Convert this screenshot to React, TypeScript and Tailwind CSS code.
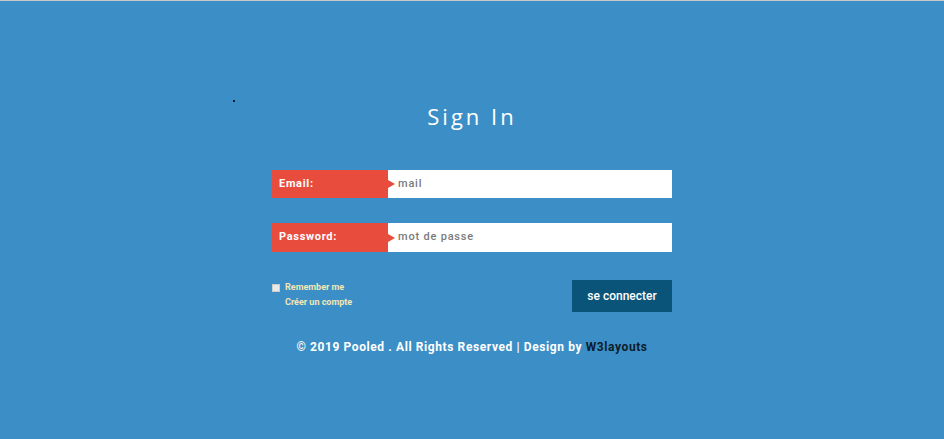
export default function App() {
  return (
    <div className="h-[439px] w-[944px] overflow-hidden border-t border-[#c9c9c9] bg-[#3c8fc6] font-['Roboto',sans-serif]">
      <div className="relative flex flex-col items-center">
        <span className="absolute left-[233px] top-[99px] h-[2px] w-[2px] bg-[#0b1a2a]" />
        <h1 className="mt-[100px] font-['Open_Sans',sans-serif] text-[22px] font-normal leading-[30px] tracking-[3px] text-white">
          Sign In
        </h1>

        <form className="mt-[39px] flex w-[400px] flex-col">
          <div className="flex h-[28px]">
            <label className="relative flex w-[116px] items-center bg-[#e84c3d] pl-[7px] text-[11px] font-bold tracking-[0.7px] text-white">
              Email:
              <span className="absolute left-full top-1/2 -translate-y-1/2 border-y-[4px] border-l-[7px] border-y-transparent border-l-[#e84c3d]" />
            </label>
            <input
              type="text"
              placeholder="mail"
              className="flex-1 bg-white pl-[10px] text-[11px] font-medium tracking-[0.8px] text-[#666] outline-none placeholder:text-[#7a7a7a]"
            />
          </div>

          <div className="mt-[25px] flex h-[29px]">
            <label className="relative flex w-[116px] items-center bg-[#e84c3d] pl-[7px] text-[11px] font-bold tracking-[0.7px] text-white">
              Password:
              <span className="absolute left-full top-1/2 -translate-y-1/2 border-y-[4px] border-l-[7px] border-y-transparent border-l-[#e84c3d]" />
            </label>
            <input
              type="password"
              placeholder="mot de passe"
              className="flex-1 bg-white pl-[10px] text-[11px] font-medium tracking-[0.8px] text-[#666] outline-none placeholder:text-[#7a7a7a]"
            />
          </div>

          <div className="mt-[28px] flex items-start justify-between">
            <div className="flex flex-col text-[9px] font-bold leading-[15px] text-[#f2e6b3]">
              <label className="flex items-center gap-[5px]">
                <span className="h-[8px] w-[8px] border border-[#ccc] bg-[#e9e9e9]" />
                Remember me
              </label>
              <a className="pl-[13px]">Créer un compte</a>
            </div>
            <button
              type="button"
              className="h-[32px] w-[100px] bg-[#0b5479] text-[12px] font-medium text-white"
            >
              se connecter
            </button>
          </div>
        </form>

        <p className="mt-[26px] text-[12px] font-bold tracking-[0.6px] text-white">
          © 2019 Pooled . All Rights Reserved | Design by{" "}
          <a className="text-[#0e1c2b]">W3layouts</a>
        </p>
      </div>
    </div>
  );
}
